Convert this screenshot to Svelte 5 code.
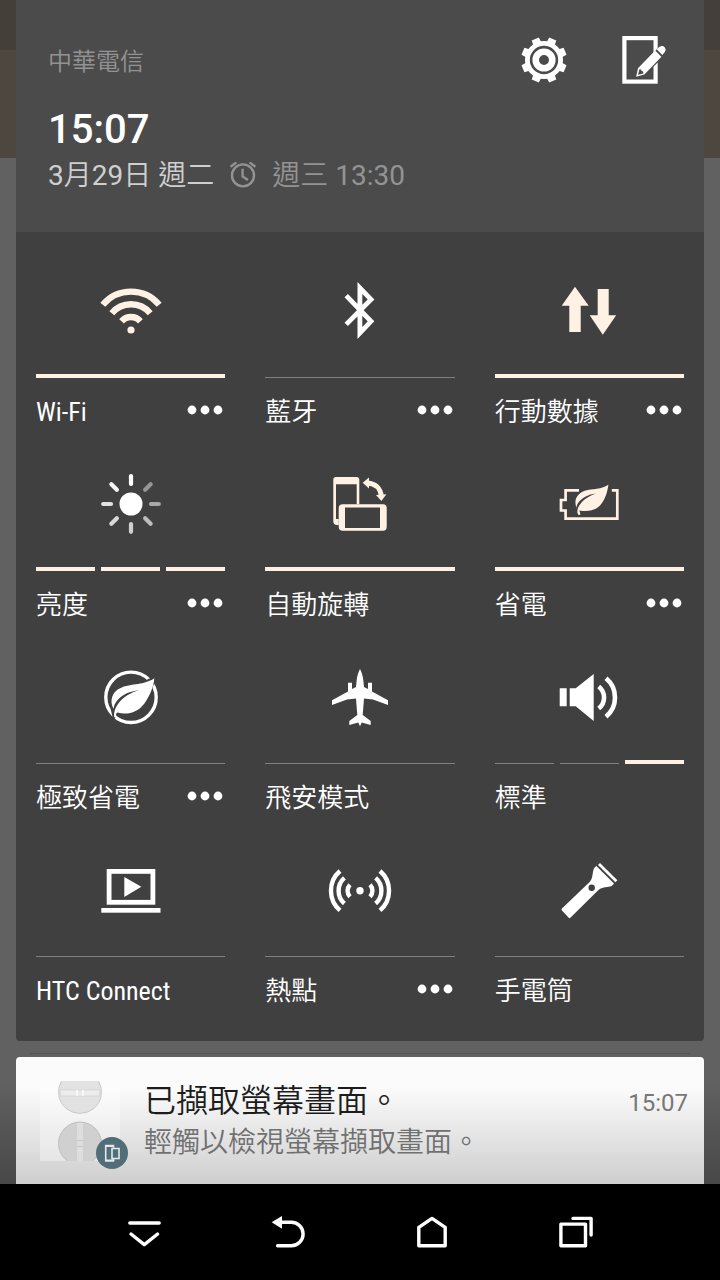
<!-- QuickSettings.svelte -->
<script lang="ts">
	type Tile = {
		id: string;
		label: string;
		icon: string;
		levels: boolean[];
		more?: boolean;
	};

	const carrier = '中華電信';
	const time = '15:07';

	let tiles = $state<Tile[]>([
		{ id: 'wifi', label: 'Wi-Fi', icon: 'wifi', levels: [true], more: true },
		{ id: 'bluetooth', label: '藍牙', icon: 'bluetooth', levels: [false], more: true },
		{ id: 'data', label: '行動數據', icon: 'data', levels: [true], more: true },
		{ id: 'brightness', label: '亮度', icon: 'brightness', levels: [true, true, true], more: true },
		{ id: 'rotate', label: '自動旋轉', icon: 'rotate', levels: [true] },
		{ id: 'power', label: '省電', icon: 'power', levels: [true], more: true },
		{ id: 'extreme', label: '極致省電', icon: 'extreme', levels: [false], more: true },
		{ id: 'airplane', label: '飛安模式', icon: 'airplane', levels: [false] },
		{ id: 'sound', label: '標準', icon: 'sound', levels: [false, false, true] },
		{ id: 'connect', label: 'HTC Connect', icon: 'connect', levels: [false] },
		{ id: 'hotspot', label: '熱點', icon: 'hotspot', levels: [false], more: true },
		{ id: 'flashlight', label: '手電筒', icon: 'flashlight', levels: [false] }
	]);

	// angle and opacity of each ray of the sun
	const rays = [
		[0, 1],
		[45, 0.45],
		[90, 0.55],
		[135, 0.65],
		[180, 0.75],
		[225, 0.8],
		[270, 0.85],
		[315, 0.95]
	];

	const teeth = [22.5, 67.5, 112.5, 157.5, 202.5, 247.5, 292.5, 337.5];

	function toggle(tile: Tile) {
		if (tile.levels.length === 1) {
			tile.levels[0] = !tile.levels[0];
		}
	}

	function isTinted(tile: Tile) {
		return tile.levels.length === 1 && tile.levels[0];
	}

	function isLatin(text: string) {
		return /^[\x20-\x7e]+$/.test(text);
	}
</script>

{#snippet tileIcon(name: string)}
	<svg class="tile-icon" viewBox="0 0 64 64" aria-hidden="true">
		{#if name === 'wifi'}
			<g class="line" stroke-width="6.4">
				<path d="M3.8 26.7A37 37 0 0 1 60.2 26.7" />
				<path d="M12.8 35.3A25 25 0 0 1 51.2 35.3" />
				<path d="M22.6 43.3A12.5 12.5 0 0 1 41.4 43.3" />
			</g>
			<circle cx="32" cy="52" r="3.6" />
		{:else if name === 'bluetooth'}
			<path
				class="line"
				stroke-width="4.8"
				d="M18.2 17.6L43 43.3L31.9 55V10L43 21.4L18.2 46.4"
			/>
		{:else if name === 'data'}
			<path d="M18 8.7L31.7 27.7H23.7V54H12.3V27.7H4.7Z" />
			<path d="M40.7 11H51.7V37.3H59.2L45.8 56.7L32.7 37.3H40.7Z" />
		{:else if name === 'brightness'}
			<circle cx="32" cy="33" r="11.5" />
			{#each rays as [angle, opacity]}
				<path
					class="line"
					stroke-width="4.2"
					stroke-linecap="round"
					d="M32 5.2V13"
					{opacity}
					transform="rotate({angle} 32 33)"
				/>
			{/each}
		{:else if name === 'rotate'}
			<path
				fill-rule="evenodd"
				d="M8 6H28.6A2.7 2.7 0 0 1 31.3 8.7V33.3H28.7V13.3H8V48H10.7V54H9A3.7 3.7 0 0 1 5.3 50.3V8.7A2.7 2.7 0 0 1 8 6Z"
			/>
			<path
				fill-rule="evenodd"
				d="M14.7 33.3H55A3.7 3.7 0 0 1 58.7 37V56A3.7 3.7 0 0 1 55 59.7H14.7A4 4 0 0 1 10.7 55.7V37.3A4 4 0 0 1 14.7 33.3ZM17 36.6V57H52V36.6Z"
			/>
			<path class="line" stroke-width="4.8" d="M39.5 12C48 12.5 52.5 18 53.3 25" />
			<path d="M34.7 11.8L41 6.4V17.4Z" />
			<path d="M53.4 30L48 24L58.4 23.2Z" />
		{:else if name === 'power'}
			<path
				class="line"
				stroke-width="2.7"
				d="M22 19.3H8.6V29H4V39.5H8.6V47.7H60.3V19.3H54.8"
			/>
			<path
				d="M51.4 13.8C50.6 21 47.6 29.6 43 34.6C38 39.8 30 40.8 22.4 39.4L23.4 43.4L21.8 44.2L20.4 42C20.2 38.4 21 36 23 33.4C27 28 32 25 38.8 22.4C31.4 23.2 25.2 26.4 21.4 31.6C20 33.6 19.6 35 19.6 37C17.8 33 18 28.4 20.4 25C25.6 17.6 35 19 43 17.2C46.4 16.4 49 15.4 51.4 13.8Z"
			/>
		{:else if name === 'extreme'}
			<circle class="line" stroke-width="3.4" cx="32" cy="33.3" r="25.2" />
			<path class="gap" d="M55.3 14.3L52 22L46 19ZM15.2 51.6L14 46L20 44Z" />
			<path
				d="M55.3 14.3C55 22 50.4 32.6 45.4 39.4C38.8 48.4 28 51.4 18.4 48.4L17.2 49.4V54L15 52.8C14.8 48 16.2 44 19 40C24 33 31 29 39.8 26.2C31 27.2 23.6 30.2 18.6 36C16 39 14.8 42 14.6 45C12.2 40.6 12 36.6 13.2 33C17.6 20 36 21.4 45 18.8C49 17.6 52.6 16.4 55.3 14.3Z"
			/>
		{:else if name === 'airplane'}
			<path
				d="M32 5C33.6 8 35 12 35.4 17L36 23L40 25V18.7H44V27.4L60 36.3V41L45 35.4L36 34.5L34.7 51L42.7 57V61L33.7 58.4L32 62.3L30.3 58.4L21.3 61V57L29.3 51L28 34.5L19 35.4L4 41V36.3L20 27.4V18.7H24V25L28 23L28.6 17C29 12 30.4 8 32 5Z"
			/>
		{:else if name === 'sound'}
			<path d="M2.7 24.3H9.7V42.3H2.7ZM12.7 24.3H18.7L36.7 10V57L18.7 42.3H12.7Z" />
			<g class="line" stroke-width="4.6">
				<path d="M41.7 22.5A14 14 0 0 1 41.7 44.5" />
				<path d="M49 14.3A25 25 0 0 1 49 52.7" />
			</g>
		{:else if name === 'connect'}
			<rect class="line" stroke-width="4.8" x="10.1" y="14.4" width="43.8" height="30.9" />
			<path d="M25.3 20L42.3 29.8L25.3 40Z" />
			<rect x="2.3" y="51" width="59.2" height="4.7" />
		{:else if name === 'hotspot'}
			<circle cx="32" cy="33.7" r="3.7" />
			<g class="line" stroke-width="4.4">
				<path d="M22 27.7A8.6 8.6 0 0 0 22 39.7M42 27.7A8.6 8.6 0 0 1 42 39.7" />
				<path d="M16.4 20.9A17 17 0 0 0 16.4 46.5M47.6 20.9A17 17 0 0 1 47.6 46.5" />
				<path d="M12 14A26 26 0 0 0 12 53.4M52 14A26 26 0 0 1 52 53.4" />
			</g>
		{:else if name === 'flashlight'}
			<path
				fill-rule="evenodd"
				d="M5 51.4L32.6 25C35.6 22 35.4 17 36.4 13C36.8 11.4 38 10 39.4 9L57 26.4C56 28 54.6 29.2 53 29.6C49 30.4 44.4 30.4 41.2 33.2L13.6 60.6C12.9 61.3 12.3 61.3 11.7 60.8L5 53.4C4.4 52.7 4.4 52 5 51.4ZM34.7 27.5A3.2 3.2 0 1 0 34.7 33.9A3.2 3.2 0 1 0 34.7 27.5Z"
			/>
			<path class="line" stroke-width="2.8" d="M42 7L59.4 24.2" />
		{/if}
	</svg>
{/snippet}

<div class="screen">
	<main class="shade">
		<header class="status">
			<div class="status-text">
				<div class="carrier">{carrier}</div>
				<div class="clock">{time}</div>
				<div class="date-row">
					<span>3<i>月</i>29<i>日</i> <i>週二</i></span>
					<svg class="alarm-icon" viewBox="0 0 28 28" aria-hidden="true">
						<circle cx="14" cy="13.4" r="11" />
						<path d="M13.6 6.8V14.4L19 18M1.6 4.8L7.4 0.4M26.4 4.8L20.6 0.4" />
					</svg>
					<span class="alarm"><i>週三</i> 13:30</span>
				</div>
			</div>
			<div class="actions">
				<button class="icon-btn" aria-label="設定">
					<svg viewBox="0 0 64 64" aria-hidden="true">
						{#each teeth as angle}
							<path d="M28.2 9.2H35.8L36.4 16H27.6Z" transform="rotate({angle} 32 32)" />
						{/each}
						<circle class="line" cx="32" cy="32" r="16.6" stroke-width="4.8" />
						<circle class="line" cx="32" cy="32" r="8.3" stroke-width="6.6" />
					</svg>
				</button>
				<button class="icon-btn" aria-label="編輯">
					<svg viewBox="0 0 64 64" aria-hidden="true">
						<rect class="line" x="12.4" y="10.1" width="31.2" height="43.5" stroke-width="4.2" />
						<path class="pencil-gap" d="M36 34L46 22L51 17L55 22L50.5 28L40 38Z" />
						<path
							fill-rule="evenodd"
							d="M24.1 48.8L26 40.2L43.2 22.4L49.4 28.8L32.4 46.6ZM26 46.8L31.4 45.4C31.4 43.8 30.6 43 29.4 42.8C29.2 41.8 28.6 41.2 27.4 41.4Z"
						/>
						<path
							d="M44.6 21.2L47.6 18.8C49.4 17.4 51.4 17.8 52.6 19.2C54 20.6 54 22.6 52.6 24.2L50.4 27Z"
						/>
					</svg>
				</button>
			</div>
		</header>

		<section class="tiles">
			{#each tiles as tile (tile.id)}
				<div class="tile">
					<button
						class="tile-toggle"
						class:tinted={isTinted(tile)}
						aria-labelledby="label-{tile.id}"
						onclick={() => toggle(tile)}
					>
						{@render tileIcon(tile.icon)}
						<span class="bars">
							{#each tile.levels as on}
								<span class="bar" class:on></span>
							{/each}
						</span>
					</button>
					<div class="tile-footer">
						<span class="tile-label" class:latin={isLatin(tile.label)} id="label-{tile.id}">
							{tile.label}
						</span>
						{#if tile.more}
							<button class="more-btn" aria-label="更多">
								<svg viewBox="0 0 36 10" aria-hidden="true">
									<circle cx="5" cy="5" r="4.4" />
									<circle cx="18" cy="5" r="4.4" />
									<circle cx="31" cy="5" r="4.4" />
								</svg>
							</button>
						{/if}
					</div>
				</div>
			{/each}
		</section>

		<hr class="stack-edge" />

		<article class="notification">
			<div class="thumb">
				<svg viewBox="0 0 80 80" aria-hidden="true">
					<rect width="80" height="80" fill="#fff" fill-opacity="0.35" />
					<g stroke="#c9c9c9" stroke-width="1">
						<path fill="#e2e2e2" d="M21.5 0A21.5 21.5 0 1 0 58.5 0" />
						<path fill="#ececec" d="M20 9H60V15H20Z" stroke="#d6d6d6" />
						<path fill="#d0d0d0" stroke="#bfbfbf" d="M27.5 80A21.5 21.5 0 1 1 52.5 80" />
						<path fill="#dedede" stroke="none" d="M37 42H43V80H37Z" />
					</g>
					<path fill="#f8f8f8" d="M36 9H38V15H36ZM42 9H44V15H42Z" />
					<path fill="#c8c8c8" d="M37 59H43V60H37ZM37 65H43V66H37Z" />
				</svg>
				<span class="badge">
					<svg viewBox="0 0 32 32" aria-hidden="true">
						<path d="M17.5 10.5V8.5H9.7V24H17.5V22M9.7 9.3H17.5M9.7 23.3H17.5M16 11.5H23V21.5H16Z" />
					</svg>
				</span>
			</div>
			<div class="notification-body">
				<div class="notification-title">已擷取螢幕畫面。</div>
				<div class="notification-text">輕觸以檢視螢幕擷取畫面。</div>
			</div>
			<time class="notification-time">{time}</time>
		</article>
	</main>

	<nav class="navbar">
		<button aria-label="隱藏">
			<svg viewBox="0 0 64 64" aria-hidden="true">
				<path d="M17.8 23H47.2M19 34L32.3 44.6L45.6 34" />
			</svg>
		</button>
		<button aria-label="返回">
			<svg viewBox="0 0 64 64" aria-hidden="true">
				<path d="M25 22.3H35.4A11.7 11.7 0 0 1 35.4 45.7H21.6" />
				<path class="solid" d="M15.6 22.3L26 16V28.7Z" />
			</svg>
		</button>
		<button aria-label="首頁">
			<svg viewBox="0 0 64 64" aria-hidden="true">
				<path d="M18.8 27.4L32 18.4L45.2 27.4V45.8H18.8Z" />
			</svg>
		</button>
		<button aria-label="最近使用">
			<svg viewBox="0 0 64 64" aria-hidden="true">
				<path d="M16.9 24.1H41.5V45.8H16.9ZM29 18.4H47.1V35" />
			</svg>
		</button>
	</nav>
</div>

<style>
	:global(body) {
		background: #000;
	}

	.screen {
		min-height: 100vh;
		display: flex;
		flex-direction: column;
		font-family: Roboto, 'Noto Sans CJK TC', sans-serif;
		color: #fff;
		background: #000;
	}

	.shade {
		flex: 1;
		padding: 0 16px;
		background:
			linear-gradient(#453f39 50px, #4d473f 50px, #4d473f 158px, transparent 158px),
			linear-gradient(#616161 1080px, #484848 100%);
	}

	button {
		padding: 0;
		border: none;
		background: none;
		color: inherit;
		font: inherit;
		cursor: pointer;
	}

	svg {
		display: block;
		fill: currentColor;
	}

	.line {
		fill: none;
		stroke: currentColor;
	}

	.status {
		display: flex;
		justify-content: space-between;
		height: 232px;
		box-sizing: border-box;
		padding: 28px 28px 0 32px;
		background: #4b4b4b;
	}

	.carrier {
		padding-top: 18px;
		font-size: 24px;
		font-weight: 350;
		line-height: 32px;
		color: #939393;
	}

	.clock {
		padding-top: 28px;
		font-size: 40px;
		font-weight: 500;
		line-height: 48px;
	}

	.date-row {
		display: flex;
		align-items: center;
		gap: 15px;
		font-size: 28px;
		line-height: 44px;
		color: #cfcfcf;
	}

	/* the Chinese characters are set a little lighter than the digits */
	.date-row i {
		font-style: normal;
		font-weight: 350;
	}

	.alarm-icon {
		width: 28px;
		height: 28px;
		fill: none;
		stroke: #939393;
		stroke-width: 2.4;
	}

	.alarm {
		color: #939393;
	}

	.actions {
		display: flex;
		gap: 36px;
	}

	.icon-btn,
	.icon-btn svg {
		width: 64px;
		height: 64px;
	}

	.pencil-gap {
		fill: #4b4b4b;
		stroke: #4b4b4b;
		stroke-width: 3;
	}

	.tiles {
		display: grid;
		grid-template-columns: repeat(3, 1fr);
		column-gap: 40px;
		padding: 20px 20px 17px;
		background: #404040;
		border-radius: 0 0 4px 4px;
	}

	.tile-toggle {
		display: flex;
		flex-direction: column;
		align-items: center;
		width: 100%;
		padding-top: 26px;
	}

	.tinted {
		color: #fff2e4;
	}

	.tile-icon {
		width: 64px;
		height: 64px;
	}

	.gap {
		fill: #404040;
		stroke: #404040;
		stroke-width: 4;
	}

	.bars {
		display: flex;
		align-items: flex-end;
		gap: 6px;
		width: 100%;
		height: 36px;
	}

	.bar {
		flex: 1;
		height: 1px;
		background: #808080;
	}

	.bar.on {
		height: 4px;
		background: #fff2e4;
	}

	.tile-footer {
		display: flex;
		align-items: center;
		justify-content: space-between;
		height: 63px;
		padding: 0 2px 4px 0;
	}

	.tile-label {
		padding-top: 4px;
		font-family: 'Roboto Condensed', Roboto, 'Noto Sans CJK TC', sans-serif;
		font-size: 26px;
		font-weight: 350;
		line-height: 36px;
		white-space: nowrap;
	}

	.tile-label.latin {
		font-weight: 400;
	}

	.more-btn svg {
		width: 36px;
		height: 10px;
	}

	.stack-edge {
		height: 1px;
		margin: 12px 14px 3px;
		border: none;
		background: #555;
	}

	.notification {
		display: flex;
		height: 127px;
		box-sizing: border-box;
		padding: 24px 16px 0 24px;
		border-radius: 4px 4px 0 0;
		background: linear-gradient(#fbfbfb 24%, #cecece);
	}

	.thumb {
		position: relative;
		width: 80px;
		height: 80px;
	}

	.badge {
		position: absolute;
		right: -8px;
		bottom: -8px;
		width: 32px;
		height: 32px;
		border-radius: 50%;
		background: #506d78;
	}

	.badge svg {
		fill: none;
		stroke: #e4eaec;
		stroke-width: 1.6;
	}

	.notification-body {
		flex: 1;
		padding-left: 24px;
		font-weight: 350;
	}

	.notification-title {
		font-size: 32px;
		line-height: 40px;
		color: #1c1c1c;
	}

	.notification-text {
		font-size: 28px;
		line-height: 44px;
		color: #707070;
	}

	.notification-time {
		font-size: 24px;
		line-height: 44px;
		color: #777;
	}

	.navbar {
		display: flex;
		height: 96px;
		padding: 0 10%;
		background: #000;
	}

	.navbar button {
		flex: 1;
		display: flex;
		align-items: center;
		justify-content: center;
	}

	.navbar svg {
		width: 64px;
		height: 64px;
		fill: none;
		stroke: #fff;
		stroke-width: 3.4;
		stroke-linecap: round;
		stroke-linejoin: round;
	}

	.navbar .solid {
		fill: #fff;
		stroke: none;
	}
</style>
